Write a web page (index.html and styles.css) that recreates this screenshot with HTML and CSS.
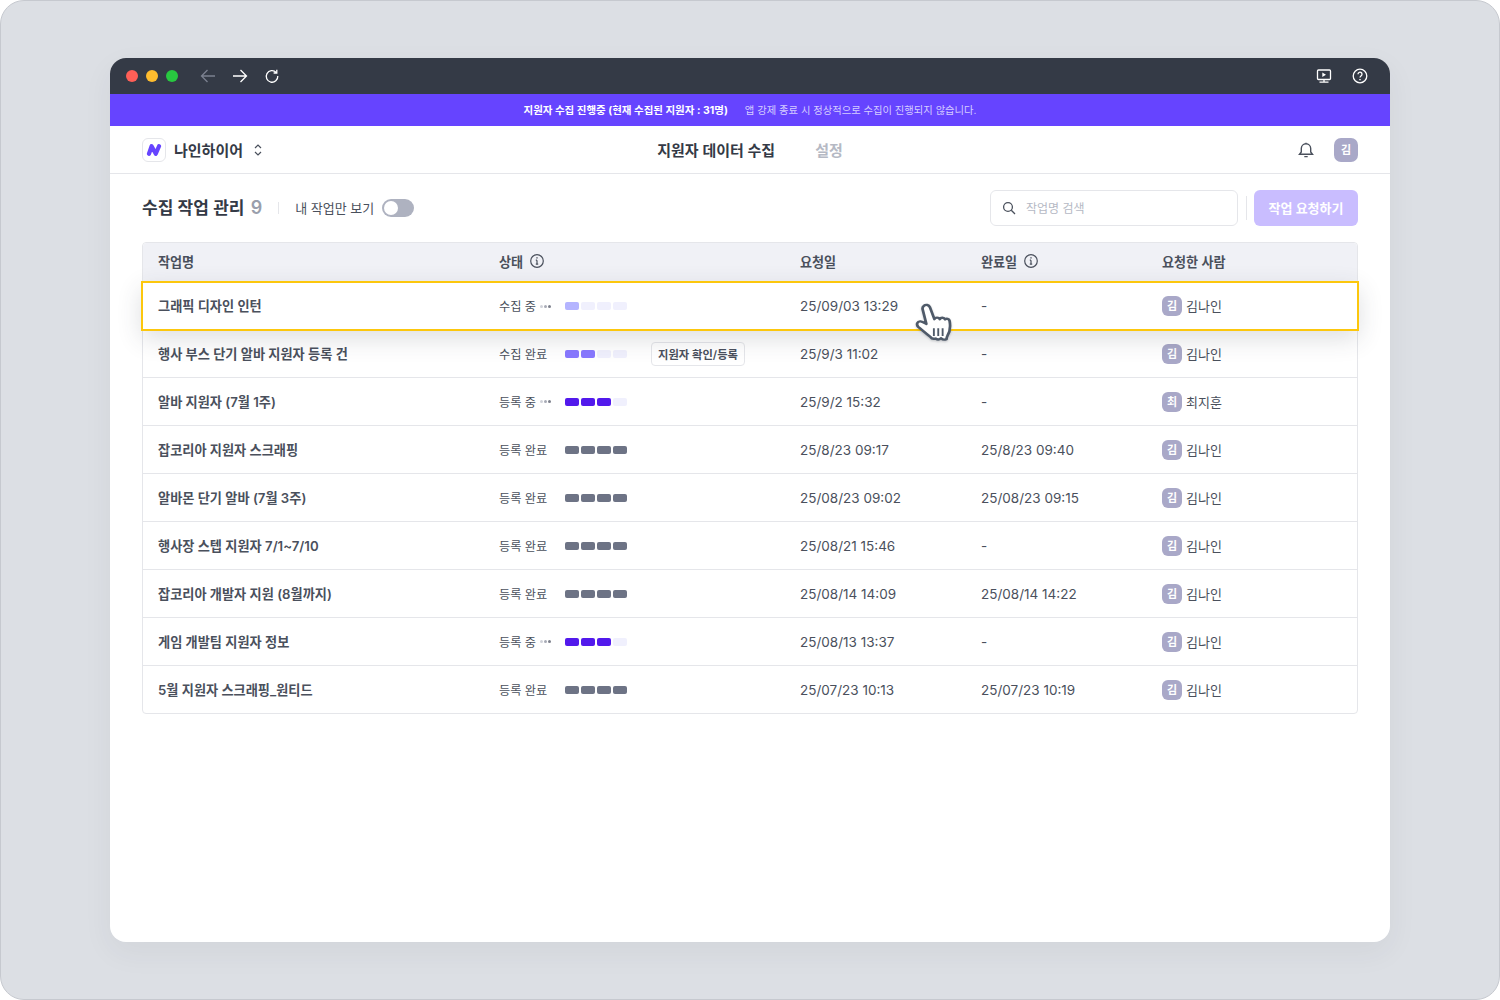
FILE: index.html
```html
<!DOCTYPE html>
<html lang="ko">
<head>
<meta charset="utf-8">
<title>나인하이어</title>
<link rel="stylesheet" href="styles.css">
</head>
<body>
<div class="stage">
  <div class="window">
    <div class="titlebar">
      <div class="lights"><i class="light red"></i><i class="light yellow"></i><i class="light green"></i></div>
      <div class="navs">
        <svg class="ic16 dim" viewBox="0 0 16 16"><path d="M15 8H1.500M7.500 2 1.500 8l6 6"/></svg>
        <svg class="ic16" viewBox="0 0 16 16"><path d="M1 8h13.500M8.500 2l6 6-6 6"/></svg>
        <svg class="ic16" viewBox="0 0 16 16"><path d="M12.200 4.400A5.800 5.800 0 1 0 13.800 8M12.800 1.800v3.200h-3.200"/></svg>
      </div>
      <div class="spacer"></div>
      <svg class="ic16" viewBox="0 0 16 16"><rect x="1.500" y="2" width="13" height="9.500" rx="1"/><path d="M8 11.500V14M3.500 14.200h9"/><path class="fill" d="M6.300 4.500v4.600L10 6.800z"/></svg>
      <svg class="ic16 help" viewBox="0 0 16 16"><circle cx="8" cy="8" r="6.800"/><path d="M6 6.200a2 2 0 1 1 3.200 1.600C8.400 8.400 8 8.800 8 9.600"/><path class="fill" d="M7.300 10.900h1.400v1.400H7.300z"/></svg>
    </div>
    <div class="banner"><b>지원자 수집 진행중 (현재 수집된 지원자 : 31명)</b><span>앱 강제 종료 시 정상적으로 수집이 진행되지 않습니다.</span></div>
    <header class="appbar">
      <div class="brand">
        <span class="logo"><svg viewBox="0 0 16 12" width="16" height="12"><path d="M3 9.800 5.600 2.200 9.800 9.800 13 2.200"/></svg></span>
        <span class="brand-name">나인하이어</span>
        <svg class="updown" viewBox="0 0 10 14" width="10" height="14"><path d="M2 5l3-3 3 3M2 9l3 3 3-3"/></svg>
      </div>
      <nav class="tabs"><span class="tab active">지원자 데이터 수집</span><span class="tab">설정</span></nav>
      <div class="app-actions">
        <svg class="bell" viewBox="0 0 16 16" width="16" height="16"><path d="M1.500 12.300h13l-1.800-2.300V6.500a4.700 4.700 0 0 0-9.400 0V10zM6.300 14.600h3.400M8 1.800V.8"/></svg>
        <span class="avatar big">김</span>
      </div>
    </header>
    <main class="content">
      <div class="toolbar">
        <h1 class="title">수집 작업 관리 <em>9</em></h1>
        <i class="vr short"></i>
        <span class="mine">내 작업만 보기</span>
        <span class="toggle"><i></i></span>
        <div class="spacer"></div>
        <label class="search">
          <svg viewBox="0 0 14 14" width="14" height="14"><circle cx="6" cy="6" r="4.400"/><path d="M9.300 9.300 13 13"/></svg>
          <span>작업명 검색</span>
        </label>
        <i class="vr tall"></i>
        <button class="cta">작업 요청하기</button>
      </div>
      <section class="table">
        <div class="row head">
          <div>작업명</div>
          <div class="with-ic">상태 <svg class="info" viewBox="0 0 14 14" width="14" height="14"><circle cx="7" cy="7" r="6.300"/><path d="M7 6.200v4M5.800 10.200h2.400M5.800 6.200H7"/><path class="dot" d="M6.300 3.200h1.400v1.400H6.300z"/></svg></div>
          <div>요청일</div>
          <div class="with-ic">완료일 <svg class="info" viewBox="0 0 14 14" width="14" height="14"><circle cx="7" cy="7" r="6.300"/><path d="M7 6.200v4M5.800 10.200h2.400M5.800 6.200H7"/><path class="dot" d="M6.300 3.200h1.400v1.400H6.300z"/></svg></div>
          <div>요청한 사람</div>
        </div>
        <div class="row highlighted">
          <div class="name">그래픽 디자인 인턴</div>
          <div class="status"><span class="st">수집 중<i class="dots"><b></b><b></b><b></b></i></span><span class="bars s1"><i></i><i></i><i></i><i></i></span></div>
          <div class="date">25/09/03 13:29</div><div class="date">-</div>
          <div class="person"><span class="avatar">김</span>김나인</div>
        </div>
        <div class="row">
          <div class="name">행사 부스 단기 알바 지원자 등록 건</div>
          <div class="status"><span class="st">수집 완료</span><span class="bars s2"><i></i><i></i><i></i><i></i></span><span class="chip">지원자 확인/등록</span></div>
          <div class="date">25/9/3 11:02</div><div class="date">-</div>
          <div class="person"><span class="avatar">김</span>김나인</div>
        </div>
        <div class="row">
          <div class="name">알바 지원자 (7월 1주)</div>
          <div class="status"><span class="st">등록 중<i class="dots"><b></b><b></b><b></b></i></span><span class="bars s3"><i></i><i></i><i></i><i></i></span></div>
          <div class="date">25/9/2 15:32</div><div class="date">-</div>
          <div class="person"><span class="avatar">최</span>최지훈</div>
        </div>
        <div class="row">
          <div class="name">잡코리아 지원자 스크래핑</div>
          <div class="status"><span class="st">등록 완료</span><span class="bars s4"><i></i><i></i><i></i><i></i></span></div>
          <div class="date">25/8/23 09:17</div><div class="date">25/8/23 09:40</div>
          <div class="person"><span class="avatar">김</span>김나인</div>
        </div>
        <div class="row">
          <div class="name">알바몬 단기 알바 (7월 3주)</div>
          <div class="status"><span class="st">등록 완료</span><span class="bars s4"><i></i><i></i><i></i><i></i></span></div>
          <div class="date">25/08/23 09:02</div><div class="date">25/08/23 09:15</div>
          <div class="person"><span class="avatar">김</span>김나인</div>
        </div>
        <div class="row">
          <div class="name">행사장 스텝 지원자 7/1~7/10</div>
          <div class="status"><span class="st">등록 완료</span><span class="bars s4"><i></i><i></i><i></i><i></i></span></div>
          <div class="date">25/08/21 15:46</div><div class="date">-</div>
          <div class="person"><span class="avatar">김</span>김나인</div>
        </div>
        <div class="row">
          <div class="name">잡코리아 개발자 지원 (8월까지)</div>
          <div class="status"><span class="st">등록 완료</span><span class="bars s4"><i></i><i></i><i></i><i></i></span></div>
          <div class="date">25/08/14 14:09</div><div class="date">25/08/14 14:22</div>
          <div class="person"><span class="avatar">김</span>김나인</div>
        </div>
        <div class="row">
          <div class="name">게임 개발팀 지원자 정보</div>
          <div class="status"><span class="st">등록 중<i class="dots"><b></b><b></b><b></b></i></span><span class="bars s3"><i></i><i></i><i></i><i></i></span></div>
          <div class="date">25/08/13 13:37</div><div class="date">-</div>
          <div class="person"><span class="avatar">김</span>김나인</div>
        </div>
        <div class="row last">
          <div class="name">5월 지원자 스크래핑_원티드</div>
          <div class="status"><span class="st">등록 완료</span><span class="bars s4"><i></i><i></i><i></i><i></i></span></div>
          <div class="date">25/07/23 10:13</div><div class="date">25/07/23 10:19</div>
          <div class="person"><span class="avatar">김</span>김나인</div>
        </div>
        <svg class="cursor" viewBox="0 0 36 44" width="45" height="48" preserveAspectRatio="none"><path d="M9.500 4.500c1.500-1.700 4-1 4.800 1.200l3.600 11c.6-2 3.600-2 4.300 0 .8-1.800 3.500-1.700 4.200.2 1-1.200 3.400-.6 3.700 1.400.7 4.600.5 9.500-1.700 13.500-.5 1-.8 2-.8 3.200-2 .8-3.400.2-4.300-.9-1.300 1.300-3 1.400-4.400.3-1.800.6-3.400 0-4.200-1.500-3.400-3-6.500-6.200-9.700-9.200-1.800-2-.8-5.300 1.800-5 1.500.2 3 1.200 4.700 2.300L8.600 8c-.4-1.300 0-2.600.9-3.500z"/><path class="ln" d="M17.500 25v7M21 25v7M24.500 25v7"/></svg>
      </section>
    </main>
  </div>
</div>
</body>
</html>
```
FILE: styles.css
```css
* { box-sizing: border-box; }
html, body { margin: 0; height: 100%; background: #fff; }
body { font-family: Inter, "Noto Sans CJK KR", sans-serif; color: #343a46; overflow: hidden; }
.stage { width: 1500px; height: 1000px; padding: 57px 109px; background: #dcdfe4; border: 1px solid #c6c9cf; border-radius: 24px; }
.window { width: 1280px; height: 884px; background: #fff; border-radius: 16px; overflow: hidden; box-shadow: 0 10px 30px rgba(52,58,70,.06); display: flex; flex-direction: column; }
.spacer { flex: 1; }

.titlebar { height: 36px; flex: none; background: #343a46; display: flex; align-items: center; padding: 0 22px 0 16px; }
.lights { display: flex; gap: 8px; margin-right: 22px; }
.light { width: 12px; height: 12px; border-radius: 50%; }
.red { background: #ff5f57; } .yellow { background: #febc2e; } .green { background: #28c840; }
.navs { display: flex; gap: 16px; }
.ic16 { width: 16px; height: 16px; fill: none; stroke: #fff; stroke-width: 1.300; }
.ic16.dim { stroke: #7b8190; }
.ic16 .fill { fill: #fff; stroke: none; }
.ic16.help { margin-left: 20px; }

.banner { height: 32px; flex: none; background: #6644ff; color: #fff; display: flex; align-items: center; justify-content: center; gap: 17px; padding-bottom: 2px; }
.banner b { font-size: 10.500px; font-weight: 700; }
.banner span { font-size: 10.300px; color: #d5cdff; }

.appbar { height: 48px; flex: none; border-bottom: 1px solid #e5e6ea; display: grid; grid-template-columns: 1fr auto 1fr; align-items: center; padding: 0 32px; }
.brand { display: flex; align-items: center; }
.logo { width: 24px; height: 24px; border: 1px solid #e5e6ea; border-radius: 6px; display: flex; align-items: center; justify-content: center; margin-right: 8px; }
.logo path { fill: none; stroke: #6644ff; stroke-width: 4.200; stroke-linejoin: round; stroke-linecap: round; }
.brand-name { font-size: 15px; font-weight: 600; color: #343a46; margin-right: 10px; }
.updown { fill: none; stroke: #4a505c; stroke-width: 1.200; }
.tabs { display: flex; gap: 40px; font-size: 15px; font-weight: 600; color: #b5b9c4; padding-bottom: 1px; }
.tab.active { color: #343a46; }
.app-actions { display: flex; justify-content: flex-end; align-items: center; gap: 20px; }
.bell { fill: none; stroke: #4a505c; stroke-width: 1.400; }

.avatar { width: 20px; height: 20px; border-radius: 6px; background: #a9a8c8; color: #fff; font-size: 11px; font-weight: 700; display: inline-flex; align-items: center; justify-content: center; flex: none; padding-bottom: 1px; }
.avatar.big { width: 24px; height: 24px; border-radius: 7px; font-size: 11px; }

.content { padding: 16px 32px; }
.toolbar { display: flex; align-items: center; height: 36px; margin-bottom: 16px; }
.title { margin: 0 0 3px; font-size: 17px; font-weight: 600; color: #343a46; }
.title em { font-style: normal; font-size: 18px; color: #9a9fac; margin-left: 2px; }
.vr { width: 1px; background: #e5e6ea; flex: none; }
.vr.short { height: 12px; margin: 0 16px; }
.vr.tall { height: 24px; margin: 0 7px 0 8px; }
.mine { font-size: 13px; color: #4a505c; margin: 0 8px 2px 0; }
.toggle { width: 32px; height: 18px; border-radius: 9px; background: #aeb2c0; padding: 2px; display: flex; }
.toggle i { width: 14px; height: 14px; border-radius: 50%; background: #fff; }
.search { width: 248px; height: 36px; border: 1px solid #e5e6ea; border-radius: 6px; display: flex; align-items: center; padding-left: 11px; gap: 10px; font-size: 12px; color: #b5b9c4; }
.search svg { fill: none; stroke: #4a505c; stroke-width: 1.300; flex: none; }
.search span { margin-bottom: 2px; }
.cta { width: 104px; height: 36px; border: 0; border-radius: 6px; background: #c9bdff; color: #fff; font: 600 13px Inter, "Noto Sans CJK KR", sans-serif; padding: 0 0 2px; }

.table { position: relative; border: 1px solid #e5e6ea; border-radius: 4px; }
.row { display: grid; grid-template-columns: 341px 301px 181px 181px 1fr; align-items: center; height: 48px; padding-left: 15px; border-bottom: 1px solid #e5e6ea; font-size: 14px; color: #4a505c; }
.row.last { border-bottom: 0; height: 47px; }
.row.head { height: 38px; background: #f0f1f6; border-radius: 4px 4px 0 0; font-size: 13.100px; font-weight: 600; color: #4a505c; border-bottom: 0; padding-bottom: 2px; }
.with-ic { display: flex; align-items: center; gap: 7px; }
.info { fill: none; stroke: #4a505c; stroke-width: 1.200; }
.info .dot { fill: #4a505c; stroke: none; }
.row.highlighted { position: relative; z-index: 1; height: 50px; margin: 0 -2px; background: #fff; border: 2px solid #fcc70d; box-shadow: 0 8px 24px rgba(52,58,70,.16); }
.row.highlighted + .row { height: 47px; }
.name { font-size: 13.200px; font-weight: 600; color: #4a505c; margin-bottom: 1px; }
.status { display: flex; align-items: center; font-size: 12.200px; color: #4a505c; }
.st { width: 66px; flex: none; display: flex; align-items: center; }
.dots { display: flex; gap: 1px; margin-left: 4px; flex: none; }
.dots b { width: 3px; height: 3px; border-radius: 50%; background: #d0d2d9; }
.dots b:nth-child(2) { background: #a8abb6; }
.dots b:nth-child(3) { background: #7d808c; }
.bars { display: flex; gap: 2px; flex: none; }
.bars i { width: 14px; height: 8px; border-radius: 2px; background: #f0f0fd; }
.s1 i:nth-child(1) { background: #b4b4ff; }
.s2 i:nth-child(-n+2) { background: #8878ff; }
.s3 i:nth-child(-n+3) { background: #5219ec; }
.s4 i { background: #6d7385; }
.chip { margin-left: 24px; height: 24px; width: 94px; border: 1px solid #e5e6ea; border-radius: 4px; font-size: 11.300px; font-weight: 600; display: flex; align-items: center; justify-content: center; padding-bottom: 1px; }
.date { font-size: 13.500px; color: #4a505c; }
.person { display: flex; align-items: center; gap: 4px; font-size: 13px; color: #4a505c; }
.row.highlighted .person, .row.highlighted + .row .person { margin-bottom: 1px; }
.cursor { position: absolute; left: 769px; top: 58px; z-index: 2; filter: drop-shadow(0 1px 1px rgba(52,58,70,.25)); }
.cursor path { fill: #fff; stroke: #4f5a69; stroke-width: 2.200; stroke-linejoin: round; }
.cursor .ln { fill: none; stroke-width: 1.500; }
```
